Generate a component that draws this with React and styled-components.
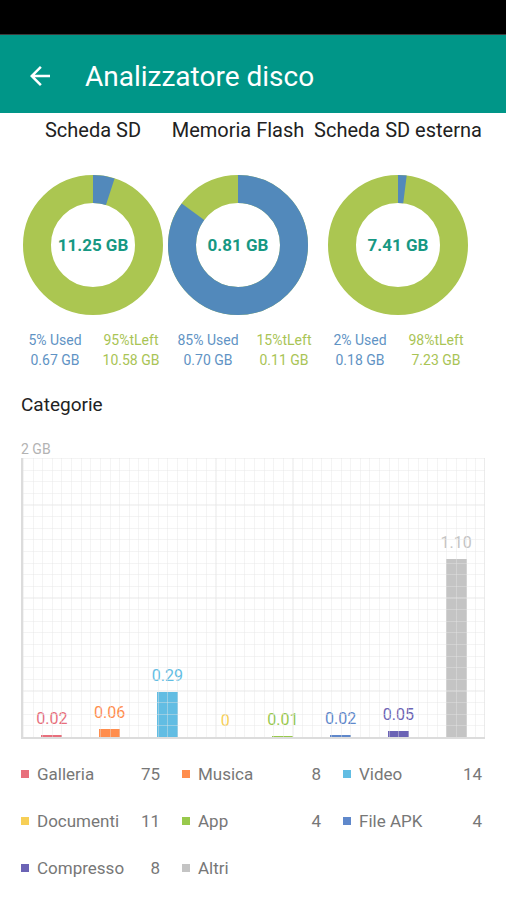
import React from 'react';
import styled, { createGlobalStyle } from 'styled-components';

const GlobalStyle = createGlobalStyle`
    html, body {
        margin: 0;
        padding: 0;
        background: #fff;
    }
    body {
        font-family: Roboto, "Noto Sans", "Liberation Sans", sans-serif;
        width: 506px;
        height: 900px;
        overflow: hidden;
    }
    * {
        box-sizing: border-box;
    }
`

const USED = '#5289bb';
const FREE = '#abc651';

const StatusBar = styled.div`
    height: 35px;
    background: #000;
    border-bottom: 1px solid #3c3c3c;
`

const AppBar = styled.div`
    height: 78px;
    background: #009688;
    display: flex;
    align-items: center;
    padding: 3px 0 0 25px;
`

const BackIcon = styled.svg`
    width: 30px;
    height: 30px;
    fill: #fff;
    flex-shrink: 0;
`

const Title = styled.h1`
    margin: 0 0 0 30px;
    padding-top: 2px;
    font-size: 28px;
    font-weight: 400;
    line-height: 1;
    color: #fff;
`

const Columns = styled.div`
    display: grid;
    grid-template-columns: 154px 136px 184px;
    padding-left: 16px;
    margin-top: ${p => p.$top || 0}px;
`

const DiskName = styled.div`
    height: 34px;
    line-height: 34px;
    text-align: center;
    font-size: 20px;
    color: #212121;
    white-space: nowrap;
`

const DonutCell = styled.div`
    display: flex;
    justify-content: center;
`

const DonutWrap = styled.div`
    display: grid;
    place-items: center;
    width: 140px;
    height: 140px;

    & > * {
        grid-area: 1 / 1;
    }
`

const DonutTotal = styled.div`
    font-size: 17px;
    font-weight: 700;
    color: #179883;
`

const StatPair = styled.div`
    width: 152px;
    margin: 0 auto;
    display: grid;
    grid-template-columns: 1fr 1fr;
    text-align: center;
    font-size: 14px;
    line-height: 20px;
    white-space: nowrap;
    padding-top: 1px;
`

const StatText = styled.div`
    color: ${p => p.$used ? '#5f93c4' : '#a9c455'};
`

const SectionTitle = styled.div`
    margin: 23px 0 0 21px;
    font-size: 19px;
    line-height: 24px;
    color: #222;
`

const AxisMax = styled.div`
    margin: 24px 0 0 21px;
    font-size: 14px;
    line-height: 16px;
    color: #b3b3b3;
`

const ChartFrame = styled.div`
    position: relative;
    margin: 1px 0 0 21px;
    width: 464px;
    height: 281px;
    border-left: 2px solid #dcdcdc;
    border-bottom: 2px solid #dcdcdc;
    display: grid;
    grid-template-columns: repeat(8, 1fr);
    align-items: end;
`

const GridLines = styled.div`
    position: absolute;
    inset: 0;
    pointer-events: none;
    border-right: 1px solid rgba(228, 228, 228, 0.5);
    background-image:
        repeating-linear-gradient(to right, rgba(228, 228, 228, 0.42) 0 1px, transparent 1px 9.625px),
        repeating-linear-gradient(to bottom, rgba(228, 228, 228, 0.42) 0 1px, transparent 1px 11.625px);
`

const BarSlot = styled.div`
    display: flex;
    flex-direction: column;
    align-items: center;
`

const ValueLabel = styled.div`
    font-size: 16px;
    line-height: 20px;
    margin-bottom: 6px;
    color: ${p => p.$color};
`

const Bar = styled.div`
    width: 21px;
    background: ${p => p.$color};
`

const Legend = styled.div`
    margin: 23px 0 0 21px;
    display: grid;
    grid-template-columns: repeat(3, 139px);
    column-gap: 22px;
    row-gap: 23px;
`

const LegendItem = styled.div`
    display: flex;
    align-items: center;
    height: 24px;
    font-size: 17px;
    color: #777;
`

const Swatch = styled.span`
    width: 8px;
    height: 8px;
    margin-right: 8px;
    background: ${p => p.$color};
    flex-shrink: 0;
`

const Count = styled.span`
    margin-left: auto;
`

const disks = [
    { name: 'Scheda SD', total: '11.25 GB', pct: 5, used: '0.67 GB', free: '10.58 GB' },
    { name: 'Memoria Flash', total: '0.81 GB', pct: 85, used: '0.70 GB', free: '0.11 GB' },
    { name: 'Scheda SD esterna', total: '7.41 GB', pct: 2, used: '0.18 GB', free: '7.23 GB' },
];

const categories = [
    { name: 'Galleria', color: '#e86f7c', value: '0.02', px: 2, count: 75 },
    { name: 'Musica', color: '#ff8d4d', value: '0.06', px: 8, count: 8 },
    { name: 'Video', color: '#62bde3', value: '0.29', px: 45, count: 14 },
    { name: 'Documenti', color: '#f7cf56', value: '0', px: 0, count: 11 },
    { name: 'App', color: '#98c94c', value: '0.01', px: 1, count: 4 },
    { name: 'File APK', color: '#5f88cb', value: '0.02', px: 2, count: 4 },
    { name: 'Compresso', color: '#6b63b5', value: '0.05', px: 6, count: 8 },
    { name: 'Altri', color: '#c4c4c4', value: '1.10', px: 178 },
];

const Donut = ({ pct, total }) => {
    const r = 56;
    const c = 2 * Math.PI * r;
    return (
        <DonutWrap>
            <svg width="140" height="140" viewBox="0 0 140 140">
                <circle cx="70" cy="70" r={r} fill="none" stroke={FREE} strokeWidth="28" />
                <circle cx="70" cy="70" r={r} fill="none" stroke={USED} strokeWidth="28"
                        strokeDasharray={`${c * pct / 100} ${c}`}
                        transform="rotate(-90 70 70)" />
            </svg>
            <DonutTotal>{total}</DonutTotal>
        </DonutWrap>
    )
}

const App = () => {
    return (
        <>
            <GlobalStyle />
            <StatusBar />
            <AppBar>
                <BackIcon viewBox="0 0 24 24">
                    <path d="M20 11H7.83l5.59-5.59L12 4l-8 8 8 8 1.41-1.41L7.83 13H20v-2z" />
                </BackIcon>
                <Title>Analizzatore disco</Title>
            </AppBar>

            <Columns>
                {disks.map(d => <DiskName key={d.name}>{d.name}</DiskName>)}
            </Columns>

            <Columns $top={28}>
                {disks.map(d => (
                    <DonutCell key={d.name}>
                        <Donut pct={d.pct} total={d.total} />
                    </DonutCell>
                ))}
            </Columns>

            <Columns $top={14}>
                {disks.map(d => (
                    <StatPair key={d.name}>
                        <StatText $used>{d.pct}% Used</StatText>
                        <StatText>{100 - d.pct}%tLeft</StatText>
                        <StatText $used>{d.used}</StatText>
                        <StatText>{d.free}</StatText>
                    </StatPair>
                ))}
            </Columns>

            <SectionTitle>Categorie</SectionTitle>
            <AxisMax>2 GB</AxisMax>

            <ChartFrame>
                {categories.map(cat => (
                    <BarSlot key={cat.name}>
                        <ValueLabel $color={cat.color}>{cat.value}</ValueLabel>
                        <Bar $color={cat.color} style={{ height: cat.px }} />
                    </BarSlot>
                ))}
                <GridLines />
            </ChartFrame>

            <Legend>
                {categories.map(cat => (
                    <LegendItem key={cat.name}>
                        <Swatch $color={cat.color} />
                        {cat.name}
                        {cat.count !== undefined && <Count>{cat.count}</Count>}
                    </LegendItem>
                ))}
            </Legend>
        </>
    )
}

export default App;
